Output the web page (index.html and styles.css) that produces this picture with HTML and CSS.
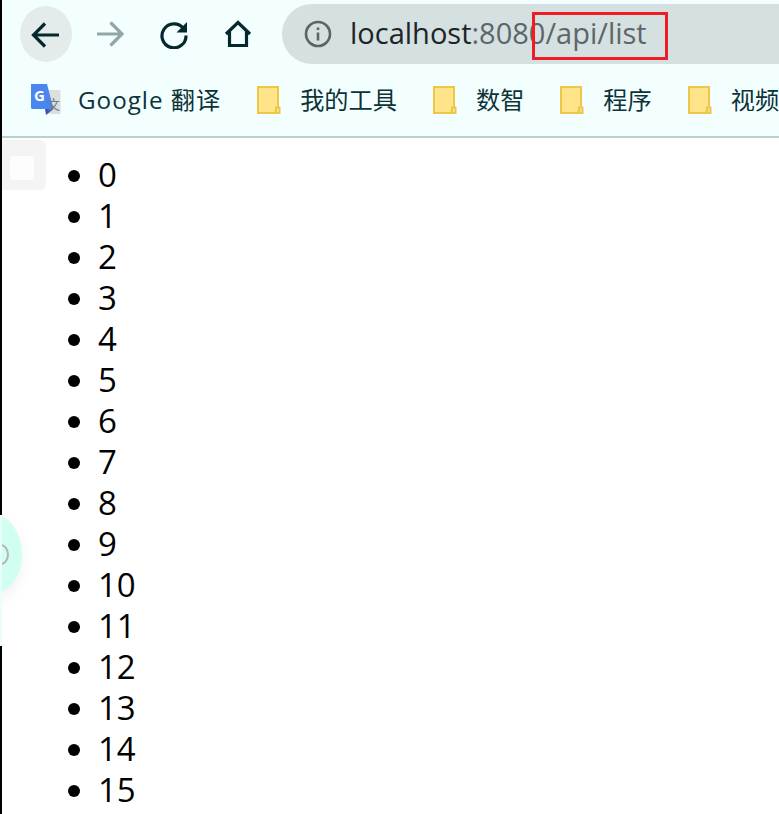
FILE: index.html
```html
<!DOCTYPE html>
<html lang="en">
  <head>
    <meta charset="UTF-8" />
    <title>localhost:8080/api/list</title>
    <link rel="stylesheet" href="styles.css">
  </head>
  <body>
    <div class="browser">
      <header class="chrome">
        <div class="toolbar">
          <span class="nav-btn nav-back">
            <svg width="32" height="32" viewBox="0 0 32 32"><path d="M29 17H4M15 5.500L3.500 17 15 28.500" /></svg>
          </span>
          <span class="nav-btn nav-forward">
            <svg width="30" height="30" viewBox="0 0 30 30"><path d="M2 15h25M15.500 3.500 27 15 15.500 26.500" /></svg>
          </span>
          <span class="nav-btn nav-reload">
            <svg width="30" height="30" viewBox="0 0 30 30">
              <path d="M24.500 9.500A12 12 0 1 0 27 16.500" />
              <path class="solid" d="M28 3v10.500H17.500z" />
            </svg>
          </span>
          <span class="nav-btn nav-home">
            <svg width="30" height="30" viewBox="0 0 30 30"><path d="M3 15 15 3.500 27 15M6.500 12v14.500h17V12" /></svg>
          </span>
          <div class="omnibox">
            <svg class="info" width="28" height="28" viewBox="0 0 28 28">
              <circle cx="14" cy="14" r="12" />
              <path d="M14 12.500v8M14 7.500v2.500" />
            </svg>
            <span class="url"><span class="host">localhost</span>:8080/api/list</span>
          </div>
        </div>
        <nav class="bookmarks">
          <span class="bookmark bookmark-first">
            <svg width="32" height="32" viewBox="0 0 32 32">
              <path fill="#dedede" d="M13 6h17.500v24H16z" />
              <path fill="#4a86f0" d="M1 0h16l6.500 25H2.500A1.500 1.500 0 0 1 1 23.500z" />
              <path fill="#3c4fc0" d="M15 25h8.500L16 31z" />
              <text class="icon-g" x="4" y="17">G</text>
              <text class="icon-wen" x="17" y="25">文</text>
            </svg>
            <span class="bookmark-label">Google 翻译</span>
          </span>
          <span class="bookmark">
            <svg class="folder" width="24" height="28" viewBox="0 0 24 28">
              <path d="M1 1h20v23.500h-2.500V27H1z" />
              <path class="clip" d="M19 21.500h3.500V27H19z" />
            </svg>
            <span class="bookmark-label">我的工具</span>
          </span>
          <span class="bookmark">
            <svg class="folder" width="24" height="28" viewBox="0 0 24 28">
              <path d="M1 1h20v23.500h-2.500V27H1z" />
              <path class="clip" d="M19 21.500h3.500V27H19z" />
            </svg>
            <span class="bookmark-label">数智</span>
          </span>
          <span class="bookmark">
            <svg class="folder" width="24" height="28" viewBox="0 0 24 28">
              <path d="M1 1h20v23.500h-2.500V27H1z" />
              <path class="clip" d="M19 21.500h3.500V27H19z" />
            </svg>
            <span class="bookmark-label">程序</span>
          </span>
          <span class="bookmark">
            <svg class="folder" width="24" height="28" viewBox="0 0 24 28">
              <path d="M1 1h20v23.500h-2.500V27H1z" />
              <path class="clip" d="M19 21.500h3.500V27H19z" />
            </svg>
            <span class="bookmark-label">视频</span>
          </span>
        </nav>
      </header>

      <main class="content">
        <ul class="number-list">
          <li>0</li>
          <li>1</li>
          <li>2</li>
          <li>3</li>
          <li>4</li>
          <li>5</li>
          <li>6</li>
          <li>7</li>
          <li>8</li>
          <li>9</li>
          <li>10</li>
          <li>11</li>
          <li>12</li>
          <li>13</li>
          <li>14</li>
          <li>15</li>
        </ul>
      </main>
    </div>

    <!-- things lying over the page -->
    <div class="highlight"></div>
    <div class="edge-line"></div>
    <div class="side-square"><span class="side-square-inner"></span></div>
    <div class="side-strip"></div>
    <div class="side-bubble"><span class="side-bubble-mark"></span></div>
  </body>
</html>
```

FILE: styles.css
```css
html,
body {
  margin: 0;
  padding: 0;
  height: 100%;
  overflow: hidden;
  background-color: white;
}

body {
  font-family: "Open Sans", "Noto Sans CJK SC", sans-serif;
}

.browser {
  height: 814px;
  overflow: hidden;
  margin-left: 2px;
}

.chrome {
  background-color: #f3ffff;
  border-bottom: 2px solid #b9d0cd;
  height: 136px;
}

.toolbar {
  display: flex;
  align-items: center;
  height: 60px;
  padding: 4px 0 0 18px;
}

.nav-btn {
  display: flex;
  align-items: center;
  justify-content: center;
  width: 52px;
  height: 56px;
  margin-right: 12px;
  border-radius: 50%;
}

.nav-btn svg path {
  fill: none;
  stroke: #04282b;
  stroke-width: 3.200;
}

.nav-btn svg path.solid {
  fill: #04282b;
  stroke: none;
}

.nav-back {
  background-color: #e4ebeb;
}

.nav-forward svg path {
  stroke: #93a6a6;
}

.omnibox {
  display: flex;
  align-items: center;
  flex: 1;
  height: 60px;
  margin-left: 6px;
  padding-left: 22px;
  background-color: #d5e0e0;
  border-radius: 30px 0 0 30px;
}

.info circle,
.info path {
  fill: none;
  stroke: #5f6466;
  stroke-width: 2.600;
}

.url {
  margin: 0 0 3px 18px;
  font-size: 29px;
  color: #5f6568;
  white-space: nowrap;
}

.host {
  color: #202427;
}

.bookmarks {
  display: flex;
  align-items: center;
  height: 72px;
  padding-left: 28px;
  white-space: nowrap;
}

.bookmark {
  display: flex;
  align-items: center;
  flex-shrink: 0;
  gap: 19px;
  margin-right: 36px;
}

.bookmark-first {
  gap: 16px;
  letter-spacing: 1px;
}

.bookmark-label {
  margin-bottom: 4px;
  font-size: 24.200px;
  color: #0c3338;
}

.icon-g {
  font-family: "Open Sans", sans-serif;
  font-size: 15px;
  font-weight: 700;
  fill: white;
}

.icon-wen {
  font-family: "Noto Sans CJK SC", sans-serif;
  font-size: 13px;
  fill: #6a7f86;
}

.folder path {
  fill: #ffe48a;
  stroke: #eec64a;
  stroke-width: 2;
}

.content {
  background-color: white;
}

.number-list {
  margin: 16px 0 0;
  padding: 0 0 0 96px;
  font-size: 33px;
  line-height: 41px;
  color: black;
}

.highlight {
  position: absolute;
  left: 532px;
  top: 12px;
  width: 130px;
  height: 42px;
  border: 3px solid #ee1c25;
}

.edge-line {
  position: absolute;
  left: 0;
  top: 0;
  width: 2px;
  height: 814px;
  background-color: black;
}

.side-square {
  position: absolute;
  left: 2px;
  top: 140px;
  width: 44px;
  height: 50px;
  background-color: #f4f4f4;
  border-radius: 0 6px 6px 0;
}

.side-square-inner {
  display: block;
  width: 24px;
  height: 24px;
  margin: 16px 0 0 8px;
  background-color: #fdfdfd;
  border-radius: 3px;
}

.side-strip {
  position: absolute;
  left: 0;
  top: 515px;
  width: 2px;
  height: 131px;
  background-color: #e8fffb;
}

.side-bubble {
  position: absolute;
  left: -38px;
  top: 514px;
  width: 60px;
  height: 80px;
  border-radius: 50%;
  background-color: #d0fff2;
  box-shadow: 0 6px 14px rgba(0, 0, 0, 0.06);
  clip-path: inset(0 -30px -30px 40px);
}

.side-bubble-mark {
  position: absolute;
  left: 30px;
  top: 30px;
  width: 13px;
  height: 17px;
  border: 2px solid #b5b5b5;
  border-radius: 50%;
}
```
